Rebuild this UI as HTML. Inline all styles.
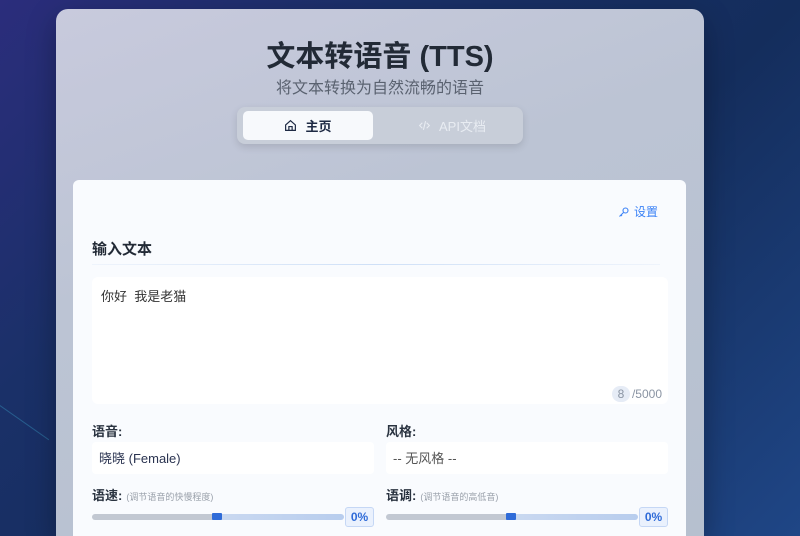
<!DOCTYPE html>
<html><head><meta charset="utf-8"><style>
*{box-sizing:border-box;margin:0;padding:0}
html,body{width:800px;height:536px;overflow:hidden}
body{font-family:"Liberation Sans","Noto Sans CJK SC",sans-serif;background:linear-gradient(135deg,#2b2d7c 0%,#1a3068 30%,#142d5c 60%,#1f4686 100%);position:relative}
.outer{position:absolute;left:56px;top:9px;width:648px;height:527px;border-radius:12px 12px 0 0;background:linear-gradient(160deg,#c8cadd 0%,#bcc4d4 40%,#b6c0cf 100%);box-shadow:0 10px 30px rgba(0,0,0,.3);overflow:hidden}
.title{position:absolute;left:0;width:648px;top:24px;text-align:center;font-size:29px;font-weight:bold;color:#222a36}
.sub{position:absolute;left:0;width:648px;top:65px;text-align:center;font-size:16px;color:#5a6270}
.tabs{position:absolute;left:181px;top:98px;width:286px;height:37px;border-radius:8px;background:#c8ced9;box-shadow:0 3px 8px rgba(0,0,0,.12)}
.tab1{position:absolute;left:6px;top:4px;width:130px;height:29px;border-radius:5px;background:#f7f9fc;font-size:13px;font-weight:bold;color:#1e2a44;display:flex;align-items:center;justify-content:center;gap:8px}
.tab2{position:absolute;left:150px;top:4px;width:130px;height:29px;font-size:13px;color:#e8ecf2;display:flex;align-items:center;justify-content:center;gap:8px}
.card{position:absolute;left:17px;top:171px;width:613px;height:356px;border-radius:6px 6px 0 0;background:#f9fbfe}
.set{position:absolute;right:28px;top:23px;font-size:12px;color:#3b82f6;display:flex;gap:4px;align-items:center}
.h{position:absolute;left:19px;top:58px;font-size:15px;font-weight:bold;color:#222a36}
.line{position:absolute;left:19px;top:84px;width:568px;height:1px;background:linear-gradient(90deg,rgba(147,180,230,.1),#cfe0f7,rgba(147,180,230,.1))}
.ta{position:absolute;left:19px;top:97px;width:576px;height:127px;background:#fff;border-radius:6px;font-size:13px;color:#333;padding:9px 9px}
.cnt{position:absolute;right:6px;bottom:2px;font-size:12px;color:#8a94a3;display:flex;align-items:center}
.cnt span{display:inline-block;width:18px;height:16px;border-radius:8px;background:#e6ecf6;text-align:center;line-height:16px;margin-right:2px}
.lab{position:absolute;font-size:13px;font-weight:bold;color:#2a3340}
.lab small{font-size:9px;font-weight:normal;color:#9aa1ab;margin-left:4px}
.sel{position:absolute;top:262px;width:282px;height:32px;background:#fff;border-radius:4px;font-size:13px;color:#2a3350;padding:6px 7px}
.track{position:absolute;top:334px;width:252px;height:6px;border-radius:3px;background:linear-gradient(90deg,#c2c8d2 0,#c2c8d2 48%,#c9d8f0 52%,#b8cdee 100%)}
.thumb{position:absolute;top:-1px;left:120px;width:10px;height:7px;background:#2f6bd8;border-radius:1px}
.pct{position:absolute;top:327px;width:29px;height:20px;border:1px solid #c5d7f5;background:#eaf1fd;border-radius:3px;font-size:12px;color:#2f6bd8;text-align:center;line-height:18px;font-weight:bold}
.glow{position:absolute;left:0;top:405px;width:60px;height:1px;background:rgba(60,160,200,.4);transform:rotate(35deg);transform-origin:0 0}
</style></head><body>
<div class="glow"></div>
<div class="outer">
<div class="title">文本转语音 (TTS)</div>
<div class="sub">将文本转换为自然流畅的语音</div>
<div class="tabs">
<div class="tab1"><svg width="13" height="13" viewBox="0 0 24 24" fill="none" stroke="#1e2a44" stroke-width="2.2"><path d="M3 11 12 3l9 8v10H3z M9 21v-7h6v7"/></svg>主页</div>
<div class="tab2"><svg width="13" height="13" viewBox="0 0 24 24" fill="none" stroke="#e8ecf2" stroke-width="2"><path d="M8 7l-5 5 5 5M16 7l5 5-5 5M14 4l-4 16"/></svg>API文档</div>
</div>
<div class="card">
<div class="set"><svg width="12" height="12" viewBox="0 0 24 24" fill="none" stroke="#3b82f6" stroke-width="2.2"><circle cx="15" cy="9" r="5"/><path d="M11 13 3 21M6 18l2 2"/></svg>设置</div>
<div class="h">输入文本</div>
<div class="line"></div>
<div class="ta">你好&nbsp;&nbsp;我是老猫<div class="cnt"><span>8</span>/5000</div></div>
<div class="lab" style="left:19px;top:241px">语音:</div>
<div class="lab" style="left:313px;top:241px">风格:</div>
<div class="sel" style="left:19px">晓晓 (Female)</div>
<div class="sel" style="left:313px;color:#555">-- 无风格 --</div>
<div class="lab" style="left:19px;top:305px">语速:<small>(调节语音的快慢程度)</small></div>
<div class="lab" style="left:313px;top:305px">语调:<small>(调节语音的高低音)</small></div>
<div class="track" style="left:19px"><div class="thumb"></div></div>
<div class="pct" style="left:272px">0%</div>
<div class="track" style="left:313px"><div class="thumb"></div></div>
<div class="pct" style="left:566px">0%</div>
</div>
</div>
</body></html>
